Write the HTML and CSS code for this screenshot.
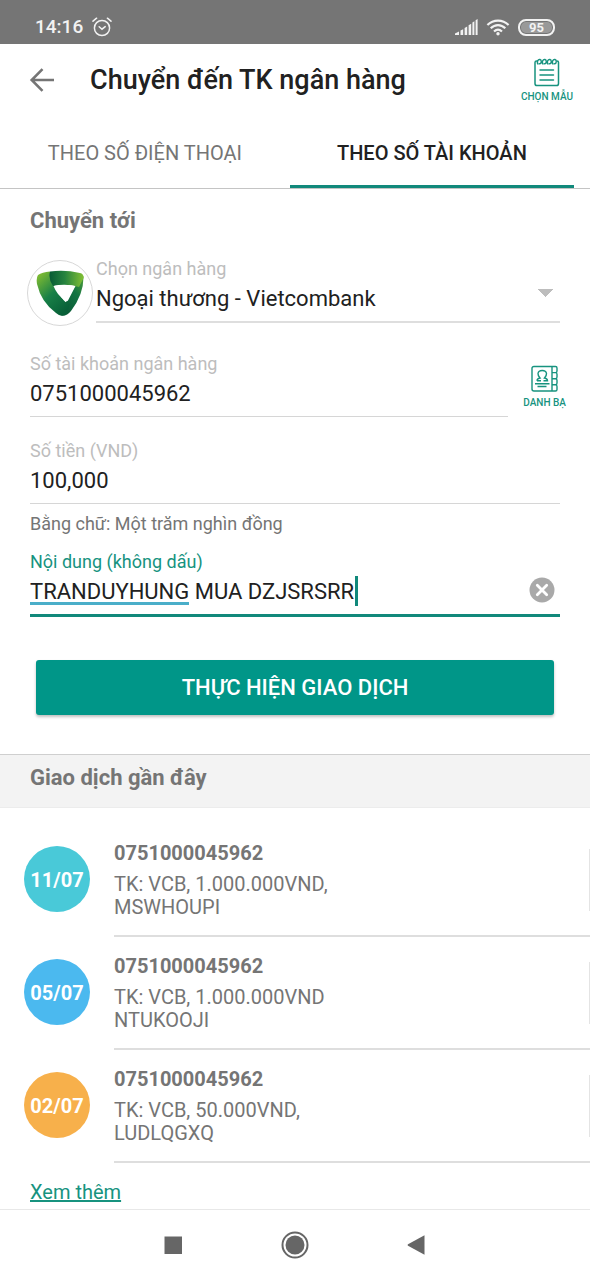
FILE: index.html
```html
<!DOCTYPE html>
<html lang="vi">
<head>
<meta charset="utf-8">
<meta name="viewport" content="width=device-width, initial-scale=1">
<title>Chuyển đến TK ngân hàng</title>
<link rel="stylesheet" href="styles.css">
</head>
<body>
<div class="screen">
  <div class="status">
    <span class="status-time">14:16</span>
    <svg class="alarm" width="20" height="20" viewBox="0 0 20 20" fill="none" stroke="#f2f2f2" stroke-width="1.5" stroke-linecap="round">
      <circle cx="10" cy="11" r="7.6"/><path d="M7.2 9.8 10 12.2 13.2 9.6M1 4.2 4.6 1.2M19 4.2 15.4 1.2"/>
    </svg>
    <span class="status-right">
      <svg width="23" height="17" viewBox="0 0 23 17" fill="#f2f2f2">
        <path d="M0 16V14.500L4 12.500V16ZM5.500 16V11.500L8.200 10.300V16ZM9.600 16V9L12.200 7.600V16ZM13.600 16V6.200L16.200 4.800V16ZM17.400 16V3.500L19.400 2.300V16ZM20.600 16V1.200L22.600 0V16Z"/>
      </svg>
      <svg width="24" height="17" viewBox="0 0 24 17" fill="none" stroke="#f2f2f2" stroke-width="2.1">
        <path d="M1.4 6.1C7.4.1 16.6.1 22.6 6.1M4.700 9.300C9 5 15 5 19.300 9.300M8 12.500C10.500 10.100 13.500 10.100 16 12.500"/><circle cx="12" cy="14.800" r="1.700" fill="#f2f2f2" stroke="none"/>
      </svg>
      <span class="battery">95</span>
    </span>
  </div>

  <header class="appbar">
    <button class="icon-button" aria-label="Quay lại">
      <svg width="26" height="24" viewBox="0 0 26 24" fill="none" stroke="#757575" stroke-width="2.600"><path d="M25 12H3M13.500 1.200 2.700 12 13.500 22.800"/></svg>
    </button>
    <h1 class="title">Chuyển đến TK ngân hàng</h1>
    <button class="tool">
      <svg width="26" height="29" viewBox="0 0 26 29" fill="none" stroke="#17937f" stroke-width="1.500" stroke-linecap="round">
        <path d="M3.500 3H2.600Q1 3 1 4.600V25.400Q1 27.500 3 27.500H22.500Q24.500 27.500 24.500 25.400V4.600Q24.500 3 23 3"/>
        <path d="M6 12H19.500M6 17H19.500M6 22H19.500"/>
        <path stroke-width="1.400" d="M4 6C2.500 4 4 1 6 1.500 8 2 7.500 6 5.500 5.800M9 6C7.500 4 9 1 11 1.500 13 2 12.500 6 10.500 5.800M14 6C12.500 4 14 1 16 1.500 18 2 17.500 6 15.500 5.800M19 6C17.500 4 19 1 21 1.500 23 2 22.500 6 20.500 5.800"/>
      </svg>
      <span>CHỌN MẪU</span>
    </button>
  </header>

  <nav class="tabs" role="tablist">
    <button class="tab" role="tab" aria-selected="false">THEO SỐ ĐIỆN THOẠI</button>
    <button class="tab tab-active" role="tab" aria-selected="true">THEO SỐ TÀI KHOẢN</button>
  </nav>

  <form class="transfer">
    <h2 class="section-title">Chuyển tới</h2>

    <div class="bank-row">
      <span class="bank-logo">
        <svg width="48" height="46" viewBox="0 0 48 46">
          <defs>
            <linearGradient id="band-left" x1="0" y1="0" x2=".7" y2="1"><stop offset=".1" stop-color="#79b833"/><stop offset=".55" stop-color="#188047"/><stop offset="1" stop-color="#086038"/></linearGradient>
            <linearGradient id="band-top" x1="0" y1="0" x2="1" y2="0"><stop offset="0" stop-color="#075b35"/><stop offset=".45" stop-color="#26833f"/><stop offset="1" stop-color="#82c034"/></linearGradient>
            <linearGradient id="band-right" x1="1" y1="0" x2=".2" y2="1"><stop offset="0" stop-color="#54a039"/><stop offset=".4" stop-color="#137442"/><stop offset="1" stop-color="#085534"/></linearGradient>
          </defs>
          <path fill="url(#band-right)" d="M47.500 6Q48 24 35 41 30 47 24 45L21 36 30 32 39 16Z"/>
          <path fill="url(#band-left)" d="M14 1.500Q6 2 2 5 0 8 1 14 5 32 20 43 24 47 30 45L34 34Q29 33 26 28L15 10Z"/>
          <path fill="url(#band-top)" d="M14 1.500Q29-.5 44 3 48 4 47.500 8L43 17Q30 13 17 16 12 9 14 1.500Z"/>
          <path fill="#fff" d="M17.500 16Q29 14 39.500 16L32 30.500Q31 32 29 30.500 21 25 17.500 16Z"/>
        </svg>
      </span>
      <div class="field field-bank">
        <label class="label" for="bank">Chọn ngân hàng</label>
        <select class="value select" id="bank"><option>Ngoại thương - Vietcombank</option></select>
      </div>
    </div>

    <div class="account-row">
      <div class="field">
        <label class="label" for="account">Số tài khoản ngân hàng</label>
        <input class="value" id="account" type="text" value="0751000045962">
      </div>
      <button class="tool" type="button">
        <svg width="27" height="28" viewBox="0 0 27 28" fill="none" stroke="#17937f" stroke-width="1.400">
          <path d="M21 1.500H3Q1 1.500 1 3.500V24Q1 26 3 26H21ZM21 1.500H24.500Q26 1.500 26 3V6Q26 7.600 24.500 7.600H21M24.500 7.600Q26 7.600 26 9.200V12Q26 13.700 24.500 13.700H21M24.500 13.700Q26 13.700 26 15.300V18Q26 19.800 24.500 19.800H21M24.500 19.800Q26 19.800 26 21.400V24.500Q26 26 24.500 26H21"/>
          <path d="M4 18.800H18.500M6.500 21.500H15.500M6 15.800Q6 13.500 9 13 6.800 10.500 7 8.500 7.500 5.500 11.200 5.500 15 5.500 15.500 8.500 15.700 10.500 13.500 13 16.500 13.500 16.500 15.800H12.500M6 15.800H10"/>
        </svg>
        <span>DANH BẠ</span>
      </button>
    </div>

    <div class="field field-amount">
      <label class="label" for="amount">Số tiền (VND)</label>
      <input class="value" id="amount" type="text" inputmode="numeric" value="100,000" aria-describedby="amount-words">
    </div>
    <p class="helper" id="amount-words">Bằng chữ: Một trăm nghìn đồng</p>

    <div class="field field-active">
      <label class="label" for="note">Nội dung (không dấu)</label>
      <div class="note-box">
        <input class="value" id="note" type="text" value="TRANDUYHUNG MUA DZJSRSRR">
        <span class="spell-mark"></span>
        <span class="caret"></span>
        <button class="clear" type="button" aria-label="Xóa">
          <svg width="26" height="26" viewBox="0 0 26 26"><circle cx="13" cy="13" r="12.500" fill="#a9a9a9"/><path d="M8.300 8.300 17.700 17.700M17.700 8.300 8.300 17.700" stroke="#fff" stroke-width="2.800" stroke-linecap="round"/></svg>
        </button>
      </div>
    </div>

    <button class="submit" type="submit">THỰC HIỆN GIAO DỊCH</button>
  </form>

  <section class="recent">
    <h2 class="section-title recent-title">Giao dịch gần đây</h2>
    <ul class="list">
      <li class="item">
        <span class="date date-teal">11/07</span>
        <div class="item-body"><strong class="item-account">0751000045962</strong><span>TK: VCB, 1.000.000VND,</span><span>MSWHOUPI</span></div>
      </li>
      <li class="item">
        <span class="date date-blue">05/07</span>
        <div class="item-body"><strong class="item-account">0751000045962</strong><span>TK: VCB, 1.000.000VND</span><span>NTUKOOJI</span></div>
      </li>
      <li class="item">
        <span class="date date-orange">02/07</span>
        <div class="item-body"><strong class="item-account">0751000045962</strong><span>TK: VCB, 50.000VND,</span><span>LUDLQGXQ</span></div>
      </li>
    </ul>
    <a class="more" href="#">Xem thêm</a>
  </section>

  <nav class="system-nav" aria-label="Điều hướng">
    <button class="icon-button" aria-label="Ứng dụng gần đây"><svg width="28" height="28" viewBox="0 0 28 28"><path fill="#666" d="M5.500 5.500h17.500v17.500h-17.500z"/></svg></button>
    <button class="icon-button" aria-label="Trang chủ"><svg width="28" height="28" viewBox="0 0 28 28"><circle cx="14" cy="14" r="12.500" fill="none" stroke="#666" stroke-width="2"/><circle cx="14" cy="14" r="9.500" fill="#666"/></svg></button>
    <button class="icon-button" aria-label="Trở về"><svg width="28" height="28" viewBox="0 0 28 28"><path fill="#666" d="M5 13.300 21.500 4.200V23.800L5 14.700Q4 14 5 13.300Z"/></svg></button>
  </nav>
</div>
</body>
</html>
```
FILE: styles.css
```css
* { box-sizing: border-box; }

body {
  margin: 0;
  background: #fff;
  color: #212121;
  font-family: Roboto, "Noto Sans", sans-serif;
  font-size: 20px;
}

h1, h2, p, ul { margin: 0; padding: 0; }

button, input, select {
  margin: 0;
  padding: 0;
  border: 0;
  background: none;
  color: inherit;
  font: inherit;
  outline: 0;
}

svg { display: block; flex: none; }

.screen {
  display: flex;
  flex-direction: column;
  min-height: 100vh;
}

.status {
  display: flex;
  align-items: center;
  height: 44px;
  padding: 10px 35px 0;
  background: #757575;
  color: #f2f2f2;
}

.status-time { font-size: 19px; font-weight: 500; line-height: 24px; }
.alarm { margin-left: 9px; }
.status-right { display: flex; align-items: center; gap: 8px; margin-left: auto; }

.battery {
  width: 37px;
  border: 2px solid #f2f2f2;
  border-radius: 8px;
  background: #999;
  box-shadow: inset 0 0 0 1px #757575;
  font-size: 13px;
  font-weight: 700;
  line-height: 13px;
  text-align: center;
}

.appbar {
  display: flex;
  align-items: center;
  height: 74px;
  padding: 0 17px 2px 29px;
}

.title {
  flex: 1;
  margin-left: 35px;
  font-size: 27px;
  font-weight: 500;
  line-height: 32px;
}

.icon-button { display: flex; }

.tool {
  display: flex;
  flex-direction: column;
  align-items: center;
  gap: 4px;
  color: #17937f;
  font-size: 10px;
  font-weight: 500;
  line-height: 12px;
  white-space: nowrap;
}

.tabs {
  display: grid;
  grid-template-columns: 51fr 50fr;
  padding-right: 16px;
  border-bottom: 1px solid #c4c4c4;
}

.tab {
  height: 70px;
  padding-top: 2px;
  border-bottom: 3px solid transparent;
  color: #757575;
}

.tab-active {
  border-color: #11897b;
  color: #212121;
  font-weight: 500;
}

.transfer {
  display: flex;
  flex-direction: column;
  padding: 17px 30px 39px;
  border-bottom: 1px solid #cfcfcf;
}

.section-title {
  color: #757575;
  font-size: 22px;
  font-weight: 700;
  line-height: 30px;
}

.field {
  display: flex;
  flex: 1;
  flex-direction: column;
  border-bottom: 1px solid #d6d6d6;
}

.label { color: #bdbdbd; font-size: 18px; line-height: 24px; }
.value { width: 100%; height: 36px; font-size: 22px; line-height: 36px; }

.bank-row {
  display: flex;
  gap: 3px;
  margin: 21px 0 0 -3px;
}

.bank-logo {
  display: flex;
  align-items: center;
  justify-content: center;
  width: 66px;
  height: 66px;
  margin-top: 3px;
  border: 1px solid #d8d8d8;
  border-radius: 50%;
}

.field-bank {
  align-self: flex-start;
  padding-bottom: 4px;
  border-bottom: 2px solid #dedede;
}

.select {
  appearance: none;
  background: conic-gradient(from -45deg at 50% 100%, #bdbdbd 90deg, transparent 0) right 7px top 8px / 15px 8px no-repeat;
}

.account-row {
  display: flex;
  align-items: flex-start;
  gap: 15px;
  margin: 26px -6px 0 0;
}

.account-row .field { padding-bottom: 4px; }
.account-row .tool { margin-top: 13px; }

.field-amount { margin-top: 22px; padding-bottom: 4px; }
.helper { margin-top: 8px; color: #757575; font-size: 18px; line-height: 24px; }

.field-active {
  margin-top: 14px;
  border-bottom: 3px solid #11897b;
}

.field-active .label { color: #17937f; }
.note-box { position: relative; padding-bottom: 4px; }

.spell-mark {
  position: absolute;
  left: 0;
  top: 28px;
  width: 159px;
  height: 3px;
  background: #4aaec9;
}

.caret {
  position: absolute;
  left: 325px;
  top: 2px;
  width: 3px;
  height: 30px;
  background: #11897b;
}

.clear { position: absolute; right: 5px; top: 3px; }

.submit {
  height: 55px;
  margin: 43px 6px 0;
  border-radius: 3px;
  background: #009688;
  box-shadow: 0 2px 3px rgba(0, 0, 0, .25);
  color: #fff;
  font-size: 22px;
  font-weight: 500;
}

.recent { flex: 1; }

.recent-title {
  padding: 8px 30px 14px;
  border-bottom: 1px solid #ececec;
  background: #f3f3f3;
}

.list { padding-top: 16px; list-style: none; }

.item { display: flex; gap: 24px; padding-left: 24px; }

.date {
  width: 66px;
  height: 66px;
  margin-top: 22px;
  border-radius: 50%;
  color: #fff;
  font-weight: 700;
  line-height: 68px;
  text-align: center;
}

.date-teal { background: #49c9d8; }
.date-blue { background: #4bb9ef; }
.date-orange { background: #f7b04b; }

.item-body {
  display: flex;
  flex: 1;
  flex-direction: column;
  padding: 17px 0 16px;
  border-bottom: 2px solid #dedede;
  background: linear-gradient(#e4e4e4, #e4e4e4) right center / 1px 62px no-repeat;
  color: #757575;
  line-height: 23px;
}

.item-account { margin-bottom: 8px; line-height: 24px; }

.more {
  display: inline-block;
  margin: 16px 30px 4px;
  color: #17937f;
  line-height: 26px;
}

.system-nav {
  display: flex;
  align-items: center;
  justify-content: center;
  gap: 94px;
  height: 71px;
  border-top: 1px solid #e8e8e8;
}
```
